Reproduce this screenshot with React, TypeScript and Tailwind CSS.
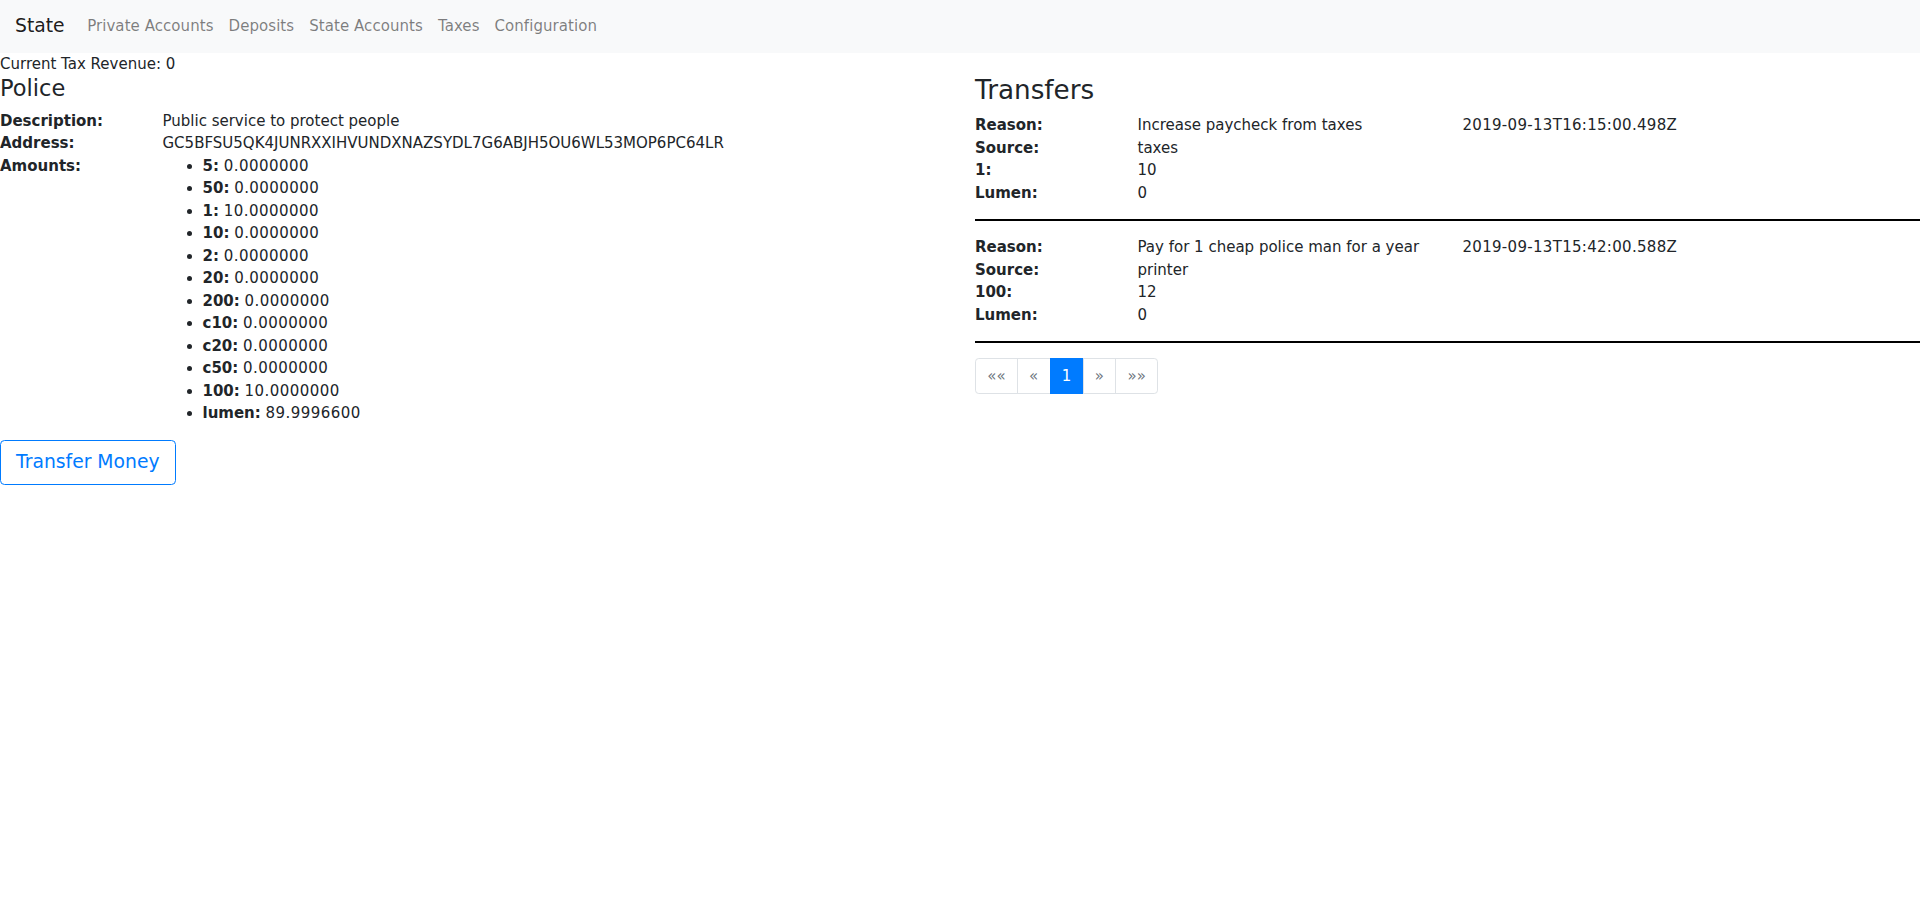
import React from "react";

const NAV_LINKS = ["Private Accounts", "Deposits", "State Accounts", "Taxes", "Configuration"];

const AMOUNTS: [string, string][] = [
  ["5", "0.0000000"],
  ["50", "0.0000000"],
  ["1", "10.0000000"],
  ["10", "0.0000000"],
  ["2", "0.0000000"],
  ["20", "0.0000000"],
  ["200", "0.0000000"],
  ["c10", "0.0000000"],
  ["c20", "0.0000000"],
  ["c50", "0.0000000"],
  ["100", "10.0000000"],
  ["lumen", "89.9996600"],
];

const TRANSFERS = [
  {
    reason: "Increase paycheck from taxes",
    date: "2019-09-13T16:15:00.498Z",
    source: "taxes",
    asset: "1",
    amount: "10",
    lumen: "0",
  },
  {
    reason: "Pay for 1 cheap police man for a year",
    date: "2019-09-13T15:42:00.588Z",
    source: "printer",
    asset: "100",
    amount: "12",
    lumen: "0",
  },
];

function Row({ label, children, extra }: { label: string; children: React.ReactNode; extra?: React.ReactNode }) {
  return (
    <div className="flex">
      <div className="w-[162.5px] shrink-0 pr-[15px] font-bold">{label}</div>
      <div className={extra !== undefined ? "w-[325px] shrink-0 pr-[15px]" : "flex-1"}>{children}</div>
      {extra !== undefined && <div className="flex-1 tracking-[0.3px]">{extra}</div>}
    </div>
  );
}

export default function App() {
  return (
    <div className="min-h-screen bg-white text-[15px] leading-[1.5] text-[#212529] font-['DejaVu_Sans',sans-serif]">
      {/* Navbar */}
      <nav className="flex items-center bg-[#f8f9fa] px-[15px] py-[7.5px]">
        <a className="mr-[15px] py-[4.6875px] text-[18.75px] leading-[1.5] text-black/90">State</a>
        <ul className="flex">
          {NAV_LINKS.map((l) => (
            <li key={l}>
              <a className="block px-[7.5px] py-[7.5px] text-black/50 tracking-[0.06px]">{l}</a>
            </li>
          ))}
        </ul>
      </nav>

      <div>Current Tax Revenue: 0</div>

      <div className="flex">
        {/* Account */}
        <div className="w-1/2 pr-[15px]">
          <h4 className="mb-[7.5px] text-[22.5px] leading-[1.2] font-normal">Police</h4>
          <Row label="Description:">Public service to protect people</Row>
          <Row label="Address:">GC5BFSU5QK4JUNRXXIHVUNDXNAZSYDL7G6ABJH5OU6WL53MOP6PC64LR</Row>
          <Row label="Amounts:">
            <ul className="mb-[15px] list-disc pl-10">
              {AMOUNTS.map(([k, v]) => (
                <li key={k}>
                  <strong className="font-bold">{k}:</strong> <span className="tracking-[0.45px]">{v}</span>
                </li>
              ))}
            </ul>
          </Row>
          <button className="rounded-[4.5px] border border-[#007bff] px-[15px] py-[7.5px] text-[18.75px] leading-[1.5] text-[#007bff]">
            Transfer Money
          </button>
        </div>

        {/* Transfers */}
        <div className="w-1/2 pl-[15px]">
          <h3 className="mb-[7.5px] text-[26.25px] leading-[1.2] font-normal">Transfers</h3>
          {TRANSFERS.map((t) => (
            <div key={t.date}>
              <Row label="Reason:" extra={t.date}>
                {t.reason}
              </Row>
              <Row label="Source:" extra="">
                {t.source}
              </Row>
              <Row label={t.asset + ":"} extra="">
                {t.amount}
              </Row>
              <Row label="Lumen:" extra="">
                {t.lumen}
              </Row>
              <hr className="my-[15px] border-0 border-t-2 border-black" />
            </div>
          ))}
          <ul className="flex leading-[1.25]">
            <li>
              <span className="block rounded-l-[3.75px] border border-[#dee2e6] px-[11.25px] py-[7.5px] text-[#6c757d]">««</span>
            </li>
            <li>
              <span className="-ml-px block border border-[#dee2e6] px-[11.25px] py-[7.5px] text-[#6c757d]">«</span>
            </li>
            <li>
              <span className="-ml-px block border border-[#007bff] bg-[#007bff] px-[11.25px] py-[7.5px] text-white">1</span>
            </li>
            <li>
              <span className="-ml-px block border border-[#dee2e6] px-[11.25px] py-[7.5px] text-[#6c757d]">»</span>
            </li>
            <li>
              <span className="-ml-px block rounded-r-[3.75px] border border-[#dee2e6] px-[11.25px] py-[7.5px] text-[#6c757d]">»»</span>
            </li>
          </ul>
        </div>
      </div>
    </div>
  );
}
